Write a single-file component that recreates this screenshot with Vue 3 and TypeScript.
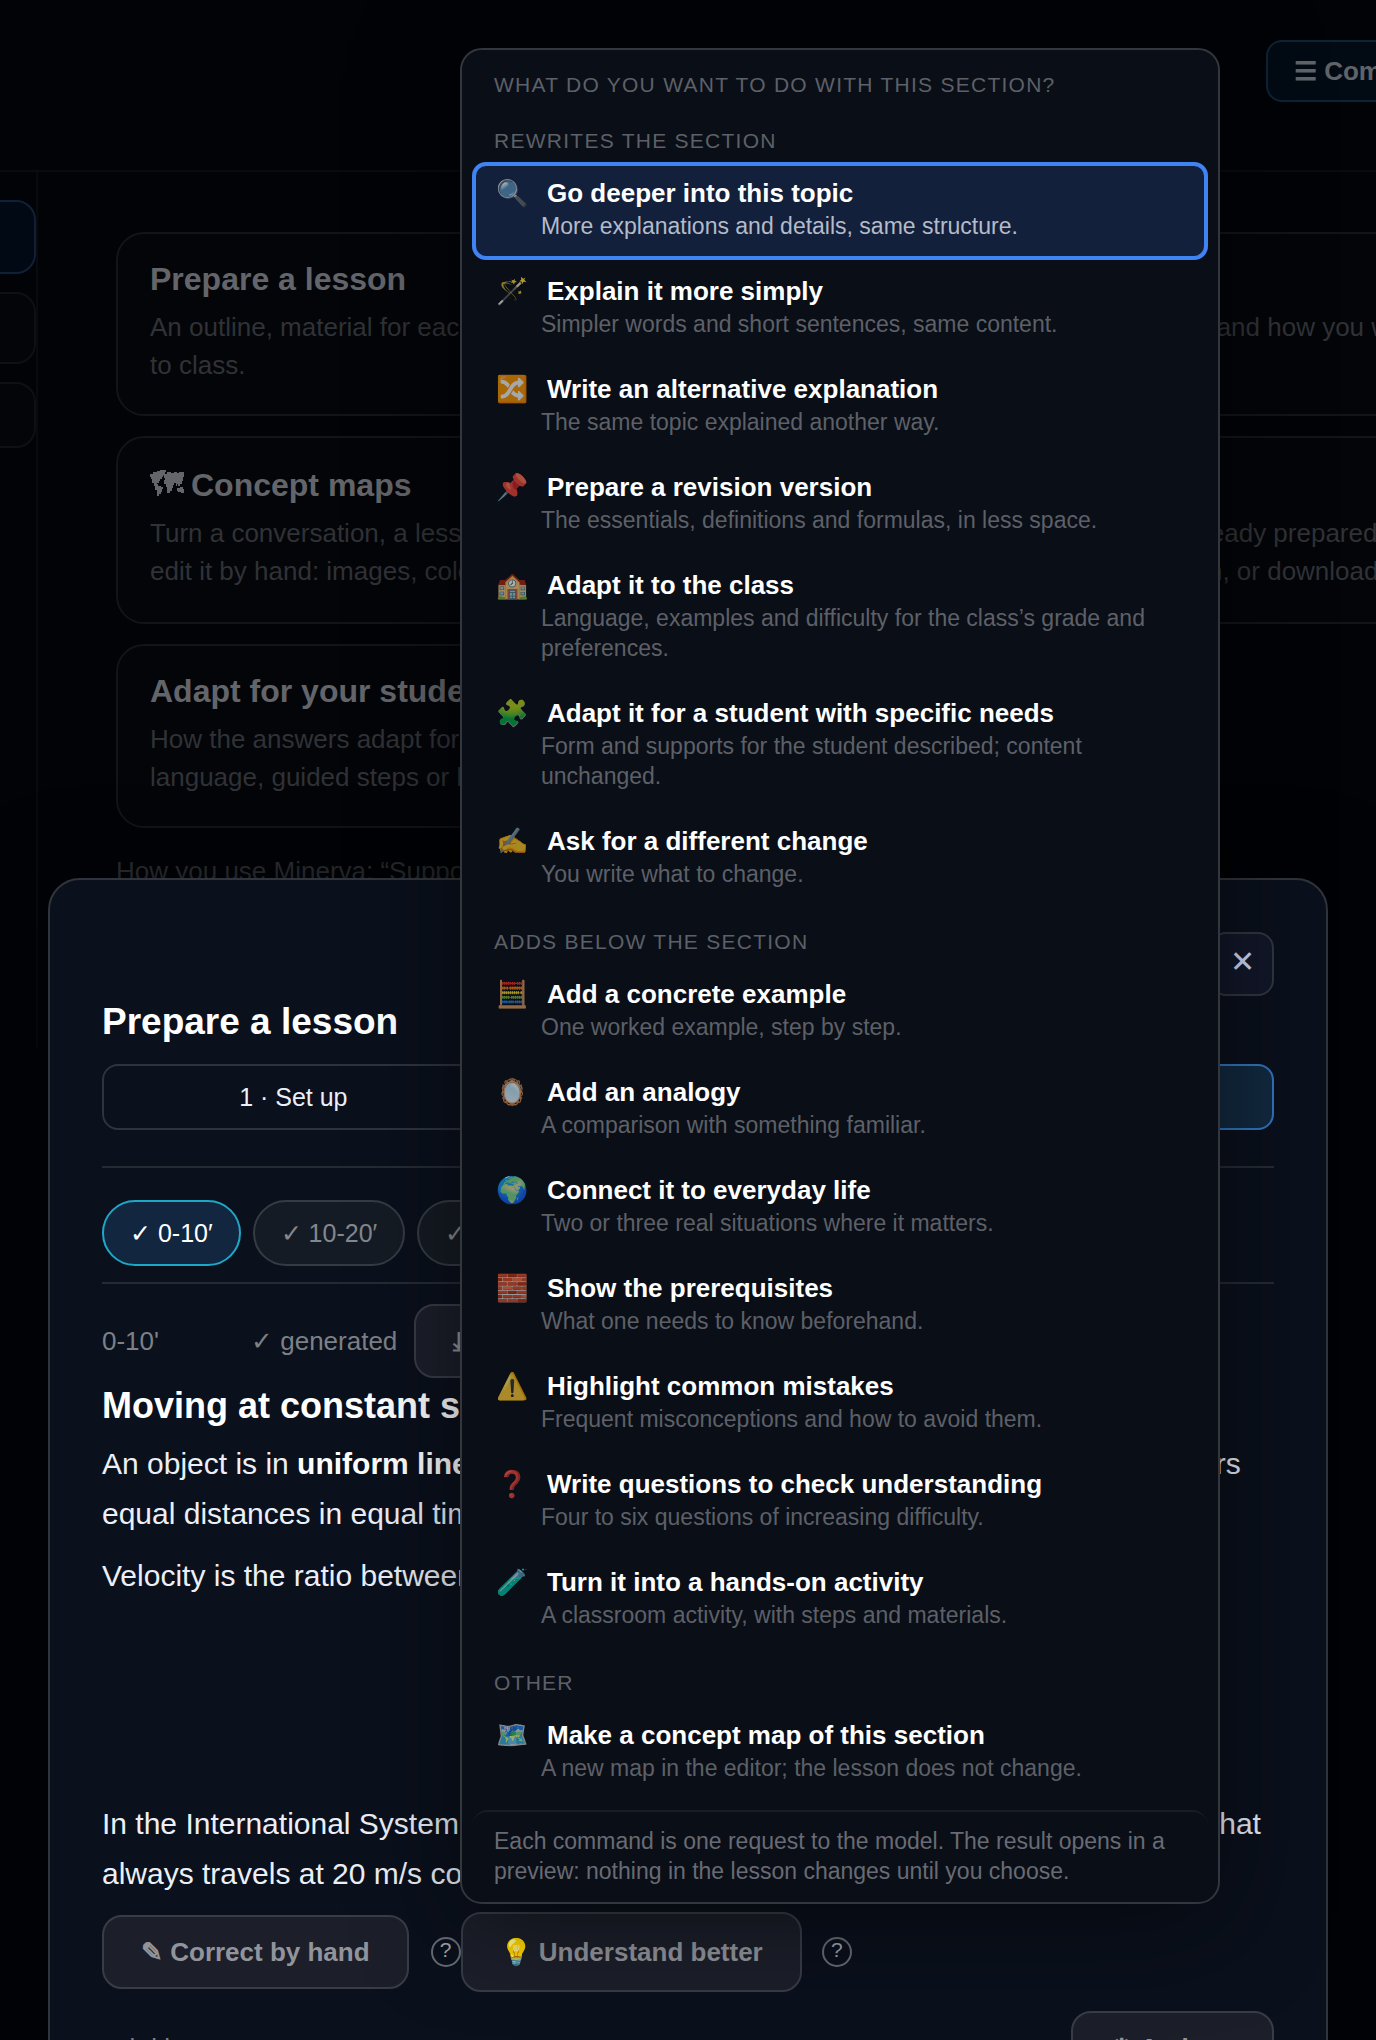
<script setup lang="ts">
interface Command {
  icon: string
  title: string
  hint: string
}

interface CommandGroup {
  label: string
  commands: Command[]
}

const groups: CommandGroup[] = [
  {
    label: 'Rewrites the section',
    commands: [
      { icon: '🔍', title: 'Go deeper into this topic', hint: 'More explanations and details, same structure.' },
      { icon: '🪄', title: 'Explain it more simply', hint: 'Simpler words and short sentences, same content.' },
      { icon: '🔀', title: 'Write an alternative explanation', hint: 'The same topic explained another way.' },
      { icon: '📌', title: 'Prepare a revision version', hint: 'The essentials, definitions and formulas, in less space.' },
      { icon: '🏫', title: 'Adapt it to the class', hint: 'Language, examples and difficulty for the class’s grade and preferences.' },
      { icon: '🧩', title: 'Adapt it for a student with specific needs', hint: 'Form and supports for the student described; content unchanged.' },
      { icon: '✍️', title: 'Ask for a different change', hint: 'You write what to change.' },
    ],
  },
  {
    label: 'Adds below the section',
    commands: [
      { icon: '🧮', title: 'Add a concrete example', hint: 'One worked example, step by step.' },
      { icon: '🪞', title: 'Add an analogy', hint: 'A comparison with something familiar.' },
      { icon: '🌍', title: 'Connect it to everyday life', hint: 'Two or three real situations where it matters.' },
      { icon: '🧱', title: 'Show the prerequisites', hint: 'What one needs to know beforehand.' },
      { icon: '⚠️', title: 'Highlight common mistakes', hint: 'Frequent misconceptions and how to avoid them.' },
      { icon: '❓', title: 'Write questions to check understanding', hint: 'Four to six questions of increasing difficulty.' },
      { icon: '🧪', title: 'Turn it into a hands-on activity', hint: 'A classroom activity, with steps and materials.' },
    ],
  },
  {
    label: 'Other',
    commands: [
      { icon: '🗺️', title: 'Make a concept map of this section', hint: 'A new map in the editor; the lesson does not change.' },
    ],
  },
]

const activeTitle = 'Go deeper into this topic'
const phases = ['0-10′', '10-20′', '20-30′', '30-40′']
</script>

<template>
  <div class="app">
    <div class="page">
      <header class="topbar">
        <button type="button" class="commands-btn">☰ Commands</button>
      </header>
      <div class="columns">
        <nav class="sidebar" aria-label="Conversations">
          <button type="button" class="nav-item current" aria-label="Current conversation"></button>
          <button type="button" class="nav-item" aria-label="Previous conversation"></button>
          <button type="button" class="nav-item short" aria-label="Older conversation"></button>
        </nav>
        <main class="main">
          <article class="card">
            <h2>Prepare a lesson</h2>
            <p>An outline, material for each part of the hour and a final quiz: you choose the class, the topic and how you want to bring it<br />to class.</p>
          </article>
          <article class="card maps">
            <h2>
              <svg class="world" viewBox="0 0 34 26" width="34" height="26" fill="currentColor" aria-hidden="true">
                <path d="M0 4h3V2h4V1h3V0h6v2h-1v3h-2v2h-1v2h-2v2H9v2H7v1h1v2h3v1h2v2h-1v3h-1v2H9v2H7v-6H5v-4H4v-3H2V9H1V7H0z" />
                <path d="M15 4h2V2h4v1h3V2h3v1h2V2h5v5h-1v4h-1v3h-2v2h-2v-2h-1v2h-1v-3h-2v2h-1v3h-1v3h-2v2h-3v-6h-1v-3h-2v-4h1V8h-1V6h-1z" />
                <path d="M27 18h3v-1h3v2h1v4h-3v-1h-3v-1h-1z" />
              </svg>
              Concept maps
            </h2>
            <p>Turn a conversation, a lesson or documents into a concept map, or start with the material already prepared. Then<br />edit it by hand: images, colours, links and notes on every node; then present them, print them, or download it.</p>
          </article>
          <article class="card narrow">
            <h2>Adapt for your students</h2>
            <p>How the answers adapt for each class: simpler<br />language, guided steps or longer texts.</p>
          </article>
          <p class="usage">How you use Minerva: “Support”</p>
        </main>
      </div>
    </div>

    <section class="sheet" role="dialog" aria-labelledby="sheet-title">
      <button type="button" class="close" aria-label="Close">✕</button>
      <h1 id="sheet-title">Prepare a lesson</h1>
      <div class="steps">
        <button type="button" class="step">1 · Set up</button>
        <button type="button" class="step">2 · Outline</button>
        <button type="button" class="step active" aria-label="Step 3"></button>
      </div>
      <div class="phases">
        <button v-for="(phase, i) in phases" :key="phase" type="button" class="phase" :class="{ active: i === 0 }">✓ {{ phase }}</button>
      </div>
      <div class="section-bar">
        <span class="time">0-10'</span>
        <span class="state">✓ generated</span>
        <button type="button" class="btn">⤓ Download</button>
      </div>
      <div class="lesson">
        <h3>Moving at constant speed</h3>
        <p>An object is in <strong>uniform linear motion</strong> when it moves along a straight path and covers<br />equal distances in equal times.</p>
        <p>Velocity is the ratio between distance and time:</p>
        <div class="formula">v = Δs / Δt</div>
        <p>In the International System speed is measured in metres per second (m/s). A horse that<br />always travels at 20 m/s covers 20 m each second.</p>
      </div>
      <div class="actions">
        <button type="button" class="btn">✎ Correct by hand</button>
        <button type="button" class="help first" aria-label="About correcting by hand">?</button>
        <button type="button" class="btn tall">💡 Understand better</button>
        <button type="button" class="help" aria-label="About understanding better">?</button>
      </div>
      <div class="sheet-footer">
        <span>subtitles</span>
        <button type="button" class="btn">⚙ Actions</button>
      </div>
    </section>

    <div class="menu" role="menu" aria-labelledby="menu-title">
      <div id="menu-title" class="menu-title">What do you want to do with this section?</div>
      <template v-for="group in groups" :key="group.label">
        <div class="group-label">{{ group.label }}</div>
        <button
          v-for="command in group.commands"
          :key="command.title"
          type="button"
          role="menuitem"
          class="command"
          :class="{ active: command.title === activeTitle }"
        >
          <span class="command-title"><span class="icon" aria-hidden="true">{{ command.icon }}</span>{{ command.title }}</span>
          <span class="hint">{{ command.hint }}</span>
        </button>
      </template>
      <p class="menu-note">Each command is one request to the model. The result opens in a preview: nothing in the lesson changes until you choose.</p>
    </div>
  </div>
</template>

<style>
html,
body {
  background: #010307;
}
</style>

<style scoped>
.app {
  position: relative;
  height: 100vh;
  overflow: hidden;
  background: #010307;
  color: #eceff7;
  font-family: "Liberation Sans", Arial, sans-serif;
  font-size: 26px;
}

.app * {
  box-sizing: border-box;
}

h1,
h2,
h3,
p {
  margin: 0;
}

button {
  font: inherit;
  color: inherit;
  background: none;
  border: 2px solid transparent;
  padding: 0;
  white-space: nowrap;
}

/* Page behind the sheet */
.topbar {
  height: 172px;
  padding-top: 40px;
  border-bottom: 2px solid #090b0f;
}

.commands-btn {
  height: 62px;
  margin-left: 92%;
  padding: 0 26px;
  border-color: #0d2336;
  border-radius: 16px;
  background: #020b14;
  color: #606367;
  font-weight: bold;
}

.columns {
  display: flex;
}

.sidebar {
  flex: none;
  display: flex;
  flex-direction: column;
  gap: 18px;
  width: 38px;
  height: 876px;
  padding-top: 28px;
  border-right: 2px solid #080a0d;
}

.nav-item {
  flex: none;
  height: 72px;
  margin-left: -24px;
  border-color: #0e1014;
  border-radius: 20px;
  background: #030509;
}

.nav-item.current {
  height: 74px;
  border-color: #0f2038;
  background: #010914;
}

.nav-item.short {
  height: 66px;
}

.main {
  flex: 1;
  display: flex;
  flex-direction: column;
  gap: 20px;
  min-width: 0;
  margin-right: -240px;
  padding: 60px 0 0 78px;
}

.card {
  padding: 26px 32px 30px;
  border: 2px solid #121418;
  border-radius: 28px;
  background: #030509;
  white-space: nowrap;
}

.card.narrow {
  width: 50%;
}

.card h2 {
  margin-bottom: 10px;
  color: #64656a;
  font-size: 32px;
  line-height: 38px;
}

.card.maps {
  padding-bottom: 32px;
}

.card.maps h2 {
  display: flex;
  align-items: center;
  gap: 7px;
  margin-bottom: 8px;
  line-height: 42px;
}

.world {
  flex: none;
  margin-bottom: 4px;
}

.card p,
.usage {
  color: #303236;
  line-height: 38px;
}

.usage {
  margin-top: 4px;
}

/* Lesson sheet */
.sheet {
  position: absolute;
  top: 878px;
  left: 48px;
  right: 48px;
  display: flex;
  flex-direction: column;
  padding: 52px;
  border: 2px solid #30343c;
  border-radius: 32px;
  background: #0a101c;
  box-shadow: 0 0 80px rgba(0, 0, 0, 0.6);
}

.close {
  align-self: flex-end;
  width: 64px;
  height: 64px;
  padding-bottom: 6px;
  border-color: #31353f;
  border-radius: 16px;
  background: #121729;
  color: #cfd8f6;
  font-size: 30px;
}

h1 {
  margin-top: 5px;
  color: #fff;
  font-size: 37px;
  line-height: 42px;
}

.steps {
  display: grid;
  grid-template-columns: repeat(3, 1fr);
  gap: 12px;
  margin-top: 21px;
  padding-bottom: 36px;
  border-bottom: 2px solid #262b33;
}

.step {
  height: 66px;
  border-color: #2f333c;
  border-radius: 16px;
  font-size: 25px;
}

.step.active {
  border-color: #2f75bf;
  background: #12293f;
}

.phases {
  display: flex;
  gap: 12px;
  padding: 32px 0 16px;
  border-bottom: 2px solid #262b33;
}

.phase {
  height: 66px;
  padding: 0 26px;
  border-color: #363b43;
  border-radius: 33px;
  background: #151b24;
  color: #84878e;
  font-size: 25px;
}

.phase.active {
  border-color: #1fa7c6;
  background: #12263f;
  color: #fff;
}

.section-bar {
  display: flex;
  align-items: center;
  margin-top: 20px;
  color: #7d8087;
}

.time {
  width: 149px;
}

.state {
  margin-right: 17px;
}

.btn {
  height: 74px;
  padding: 0 37px;
  border-color: #383c46;
  border-radius: 20px;
  background: #1c1f2a;
  color: #92949b;
  font-weight: bold;
}

.btn.tall {
  height: 80px;
}

.lesson {
  display: flex;
  flex-direction: column;
  gap: 12px;
  margin-top: 6px;
  font-size: 30px;
  line-height: 50px;
  white-space: nowrap;
}

.lesson h3 {
  color: #fff;
  font-size: 36px;
  line-height: 43px;
}

.lesson strong {
  color: #fff;
}

.formula {
  display: grid;
  place-items: center;
  min-height: 174px;
}

.actions {
  display: flex;
  align-items: center;
  margin-top: 13px;
}

.help {
  width: 30px;
  height: 30px;
  margin-left: 20px;
  padding-bottom: 4px;
  border-color: #676b74;
  border-radius: 50%;
  color: #a0a3ab;
  font-size: 21px;
  line-height: 22px;
}

.help.first {
  margin-left: 22px;
}

.sheet-footer {
  display: flex;
  align-items: center;
  justify-content: space-between;
  margin-top: 19px;
  color: #7d8087;
}

/* Command menu */
.menu {
  position: absolute;
  top: 48px;
  left: 460px;
  width: 760px;
  padding: 10px;
  border: 2px solid #33363c;
  border-radius: 22px;
  background: #0a0e17;
  box-shadow: 0 16px 100px rgba(0, 0, 0, 0.5);
}

.menu-title,
.group-label {
  color: #5d6067;
  font-size: 21px;
  line-height: 28px;
  letter-spacing: 0.06em;
  text-transform: uppercase;
}

.menu-title {
  padding: 11px 22px 8px;
}

.group-label {
  padding: 20px 22px 7px;
}

.command {
  display: block;
  width: 100%;
  padding: 14px 22px 19px;
  border: 0;
  border-radius: 14px;
  text-align: left;
  white-space: normal;
}

.command.active {
  background: #12203b;
  outline: 4px solid #4083f2;
  outline-offset: -4px;
}

.command-title {
  display: flex;
  color: #fff;
  font-weight: bold;
  line-height: 35px;
}

.icon {
  width: 36px;
  margin-right: 17px;
  text-align: center;
  opacity: 0.65;
}

.hint {
  display: block;
  padding-left: 47px;
  color: #5d6067;
  font-size: 23px;
  line-height: 30px;
}

.command.active .hint {
  color: #b4bbc9;
}

.menu-note {
  margin-top: 8px;
  padding: 14px 22px 6px;
  border-top: 2px solid #1a1d25;
  border-radius: 16px;
  color: #686b73;
  font-size: 23px;
  line-height: 30px;
}
</style>
